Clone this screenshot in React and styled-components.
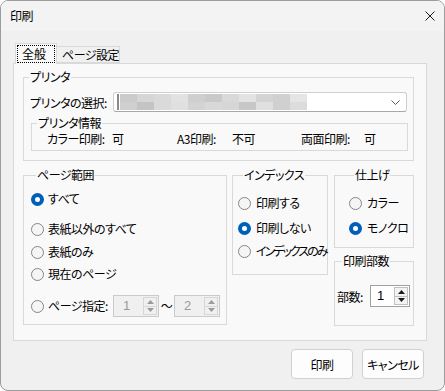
import React from "react";
import styled, { createGlobalStyle } from "styled-components";

const GlobalStyle = createGlobalStyle`
  html, body {
    margin: 0;
    padding: 0;
    background: #ffffff;
  }
  body {
    font-family: "Noto Sans CJK JP", "Noto Sans", sans-serif;
    font-size: 12px;
    color: #000000;
    font-feature-settings: "palt";
    letter-spacing: -0.5px;
  }
  * {
    box-sizing: border-box;
  }
`;

const blurShades = [
  ["#cbcbcb", "#d6d6d6", "#dadada", "#e2e2e2", "#cfcfcf", "#c9c9c9", "#d9d9d9", "#e3e3e3", "#d4d4d4", "#d0d0d0", "#e5e5e5"],
  ["#cfcfcf", "#c4c4c4", "#dadada", "#e0e0e0", "#d3d3d3", "#d8d8d8", "#d6d6d6", "#c7c7c7", "#e0e0e0", "#d0d0d0", "#dcdcdc"],
];

function App() {
  return (
    <>
      <GlobalStyle />
      <Window>
        <TitleBar>
          <Title>印刷</Title>
          <svg width="10" height="10" viewBox="0 0 10 10">
            <path d="M0.5 0.5 L9.5 9.5 M9.5 0.5 L0.5 9.5" stroke="#1a1a1a" strokeWidth="1" />
          </svg>
        </TitleBar>

        <Body>
          <TabRow>
            <Tab $active>
              <Focus>全般</Focus>
            </Tab>
            <Tab>ページ設定</Tab>
          </TabRow>

          <Panel>
            <Group $w={391} $h={91}>
              <Legend>プリンタ</Legend>
              <PrinterRow>
                <Label $w={83}>プリンタの選択:</Label>
                <Select>
                  <svg width="190" height="16" viewBox="0 0 190 16">
                    <rect x="0" y="0" width="2" height="16" fill="#8a8a8a" />
                    {blurShades.map((row, r) =>
                      row.map((c, i) => (
                        <rect key={r + "-" + i} x={3 + i * 17} y={r * 8} width="17" height="8" fill={c} />
                      ))
                    )}
                  </svg>
                  <svg width="9" height="5" viewBox="0 0 9 5">
                    <path d="M0.5 0.5 L4.5 4.5 L8.5 0.5" fill="none" stroke="#5a5a5a" strokeWidth="1" />
                  </svg>
                </Select>
              </PrinterRow>

              <Group $w={377} $h={35} $ml={7} $mt={4}>
                <Legend>プリンタ情報</Legend>
                <InfoRow>
                  <InfoItem>
                    <Label $w={65}>カラー印刷:</Label>
                    <span>可</span>
                  </InfoItem>
                  <InfoItem>
                    <Label $w={55}>A3印刷:</Label>
                    <span>不可</span>
                  </InfoItem>
                  <InfoItem>
                    <Label $w={63}>両面印刷:</Label>
                    <span>可</span>
                  </InfoItem>
                </InfoRow>
              </Group>
            </Group>

            <Lower>
              <Group $w={204} $h={157} $pl={7}>
                <Legend>ページ範囲</Legend>
                <Radio $mt={9}>
                  <Dot $on />
                  すべて
                </Radio>
                <Radio $mt={14}>
                  <Dot />
                  表紙以外のすべて
                </Radio>
                <Radio $mt={7}>
                  <Dot />
                  表紙のみ
                </Radio>
                <Radio $mt={6}>
                  <Dot />
                  現在のページ
                </Radio>
                <Radio $mt={13} $h={22}>
                  <Dot />
                  <RangeRow>
                    <Label $w={65}>ページ指定:</Label>
                    <Spinner value="1" width={46} disabled />
                    <Tilde>～</Tilde>
                    <Spinner value="2" width={46} disabled />
                  </RangeRow>
                </Radio>
              </Group>

              <Group $w={96} $h={107} $pl={5}>
                <Legend>インデックス</Legend>
                <Radio $mt={13} $gap={5}>
                  <Dot />
                  印刷する
                </Radio>
                <Radio $mt={9} $gap={5}>
                  <Dot $on />
                  印刷しない
                </Radio>
                <Radio $mt={7} $gap={5} $tight>
                  <Dot />
                  インデックスのみ
                </Radio>
              </Group>

              <Side>
                <Group $w={80} $h={80} $pl={14}>
                  <Legend>仕上げ</Legend>
                  <Radio $mt={13} $gap={5}>
                    <Dot />
                    カラー
                  </Radio>
                  <Radio $mt={9} $gap={5}>
                    <Dot $on />
                    モノクロ
                  </Radio>
                </Group>
                <Group $w={80} $h={72} $pl={2}>
                  <Legend>印刷部数</Legend>
                  <CopiesRow>
                    <Label $w={33}>部数:</Label>
                    <Spinner value="1" width={40} />
                  </CopiesRow>
                </Group>
              </Side>
            </Lower>
          </Panel>

          <Actions>
            <Button>印刷</Button>
            <Button>キャンセル</Button>
          </Actions>
        </Body>
      </Window>
    </>
  );
}

function Spinner({ value, width, disabled }) {
  const color = disabled ? "#9a9a9a" : "#1a1a1a";
  return (
    <Spin $w={width} $off={disabled}>
      <SpinValue $off={disabled} $pl={disabled ? 9 : 6}>
        {value}
      </SpinValue>
      <SpinButtons>
        <SpinBtn $off={disabled}>
          <svg width="7" height="4" viewBox="0 0 7 4">
            <path d="M3.5 0 L7 4 L0 4 Z" fill={color} />
          </svg>
        </SpinBtn>
        <SpinBtn $off={disabled}>
          <svg width="7" height="4" viewBox="0 0 7 4">
            <path d="M0 0 L7 0 L3.5 4 Z" fill={color} />
          </svg>
        </SpinBtn>
      </SpinButtons>
    </Spin>
  );
}

export default App;

const Window = styled.div`
  width: 445px;
  height: 391px;
  border: 1px solid #9c9c9c;
  border-radius: 8px;
  overflow: hidden;
  background: #f0f0f0;
  display: flex;
  flex-direction: column;
`;

const TitleBar = styled.div`
  height: 30px;
  flex: none;
  display: flex;
  align-items: center;
  justify-content: space-between;
  padding: 0 9px 0 9px;
  background: #f3f3f3;
`;

const Title = styled.span`
  font-size: 12px;
  line-height: 14px;
`;

const Body = styled.div`
  flex: 1;
  display: flex;
  flex-direction: column;
  padding: 12px 17px 0 12px;
`;

const TabRow = styled.div`
  display: flex;
  align-items: flex-end;
  height: 20px;
  padding-left: 2px;
`;

const Tab = styled.div`
  position: relative;
  z-index: ${(p) => (p.$active ? 1 : 0)};
  height: ${(p) => (p.$active ? 21 : 17)}px;
  width: ${(p) => (p.$active ? 42 : 64)}px;
  margin-bottom: ${(p) => (p.$active ? -1 : 0)}px;
  margin-left: ${(p) => (p.$active ? 0 : -1)}px;
  padding: ${(p) => (p.$active ? "1px" : "0 0 0 5px")};
  border: 1px solid #d9d9d9;
  border-bottom: ${(p) => (p.$active ? "none" : "1px solid #d9d9d9")};
  background: ${(p) => (p.$active ? "#f9f9f9" : "#f0f0f0")};
  line-height: 15px;
  white-space: nowrap;
`;

const Focus = styled.span`
  display: block;
  width: 38px;
  height: 18px;
  border: 1px dotted #000000;
  padding-left: 4px;
  line-height: 16px;
  letter-spacing: 0;
`;

const Panel = styled.div`
  height: 278px;
  flex: none;
  border: 1px solid #d9d9d9;
  background: #f9f9f9;
  padding: 6px 0 0 9px;
`;

const Group = styled.fieldset`
  margin: ${(p) => p.$mt || 0}px 0 0 ${(p) => p.$ml || 0}px;
  padding: 0 0 0 ${(p) => p.$pl || 0}px;
  border: 1px solid #d9d9d9;
  width: ${(p) => p.$w}px;
  height: ${(p) => p.$h}px;
  min-inline-size: 0;
  flex: none;
`;

const Legend = styled.legend`
  margin-left: 5px;
  padding: 0 1px;
  line-height: 14px;
  font-size: 12px;
  white-space: nowrap;
`;

const Label = styled.span`
  display: inline-block;
  width: ${(p) => p.$w}px;
  flex: none;
  white-space: nowrap;
`;

const PrinterRow = styled.div`
  display: flex;
  align-items: center;
  margin-top: 8px;
  padding-left: 6px;
`;

const Select = styled.div`
  width: 294px;
  height: 20px;
  display: flex;
  align-items: center;
  justify-content: space-between;
  padding: 0 6px 0 3px;
  background: #ffffff;
  border: 1px solid #cfcfcf;
  border-bottom-color: #a8a8a8;
  border-radius: 3px;
`;

const InfoRow = styled.div`
  display: grid;
  grid-template-columns: 130px 124px 1fr;
  margin-top: 2px;
  padding-left: 15px;
  line-height: 14px;
`;

const InfoItem = styled.div`
  display: flex;
  white-space: nowrap;
`;

const Lower = styled.div`
  display: flex;
  gap: 5px;
  margin-top: 7px;
`;

const Side = styled.div`
  display: flex;
  flex-direction: column;
  gap: 6px;
  margin-left: 1px;
`;

const Radio = styled.div`
  display: flex;
  align-items: center;
  gap: ${(p) => p.$gap || 4}px;
  height: ${(p) => p.$h || 16}px;
  margin-top: ${(p) => p.$mt}px;
  white-space: nowrap;
  line-height: 14px;
  letter-spacing: ${(p) => (p.$tight ? "-2px" : "inherit")};
`;

const RangeRow = styled.div`
  display: flex;
  align-items: center;
`;

const Dot = styled.span`
  width: 13px;
  height: 13px;
  flex: none;
  border-radius: 50%;
  border: ${(p) => (p.$on ? "none" : "1px solid #858585")};
  background: ${(p) => (p.$on ? "#005fb8" : "#f5f5f5")};
  display: flex;
  align-items: center;
  justify-content: center;

  &::after {
    content: "";
    display: ${(p) => (p.$on ? "block" : "none")};
    width: 5px;
    height: 5px;
    border-radius: 50%;
    background: #ffffff;
  }
`;

const Tilde = styled.span`
  width: 15px;
  text-align: center;
  flex: none;
`;

const Spin = styled.div`
  width: ${(p) => p.$w}px;
  height: 22px;
  flex: none;
  display: flex;
  border: 1px solid ${(p) => (p.$off ? "#cacaca" : "#a0a0a0")};
  background: ${(p) => (p.$off ? "#f0f0f0" : "#ffffff")};
`;

const SpinValue = styled.span`
  flex: 1;
  padding-left: ${(p) => p.$pl}px;
  font-family: "Liberation Sans", Arial, sans-serif;
  font-size: 13px;
  line-height: 20px;
  letter-spacing: 0;
  color: ${(p) => (p.$off ? "#9a9a9a" : "#000000")};
`;

const SpinButtons = styled.div`
  width: 15px;
  display: flex;
  flex-direction: column;
  padding: 1px 1px 1px 0;
`;

const SpinBtn = styled.span`
  flex: 1;
  display: flex;
  align-items: center;
  justify-content: center;
  border: 1px solid ${(p) => (p.$off ? "#d6d6d6" : "#c0c0c0")};
  background: ${(p) => (p.$off ? "#f0f0f0" : "#f3f3f3")};

  & + & {
    border-top: none;
  }
`;

const CopiesRow = styled.div`
  display: flex;
  align-items: center;
  margin-top: 17px;
`;

const Actions = styled.div`
  display: flex;
  justify-content: flex-end;
  gap: 9px;
  margin-top: 8px;
  padding-right: 3px;
`;

const Button = styled.button`
  width: 62px;
  height: 30px;
  padding: 0;
  border: 1px solid #d0d0d0;
  border-radius: 4px;
  background: #fdfdfd;
  font-family: "Noto Sans CJK JP", "Noto Sans", sans-serif;
  font-feature-settings: "palt";
  letter-spacing: -0.5px;
  font-size: 12px;
  color: #000000;
`;
